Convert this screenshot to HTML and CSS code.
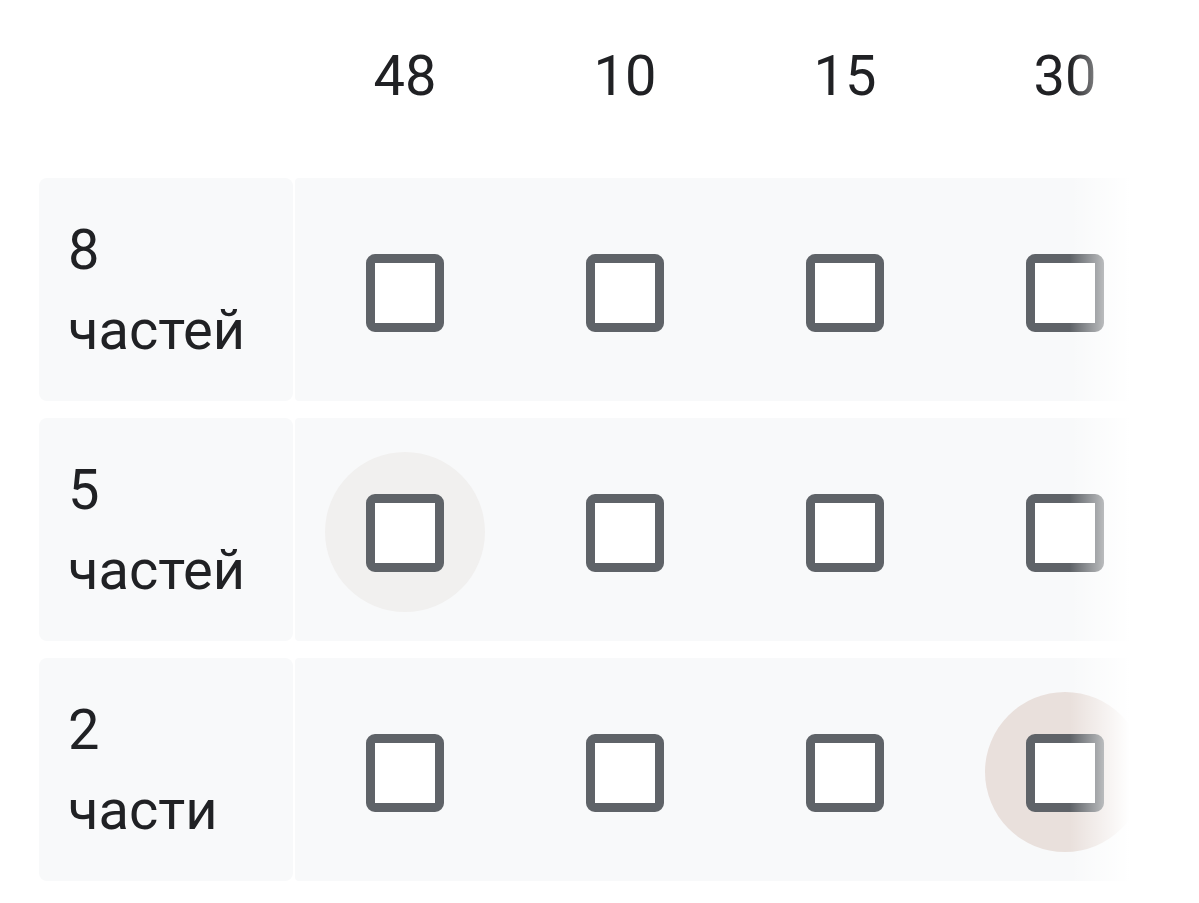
FILE: index.html
```html
<!DOCTYPE html>
<html lang="ru">
<head>
    <meta charset="UTF-8">
    <title>grid</title>
    <link rel="stylesheet" href="styles.css">
</head>
<body>
    <div class="grid-wrap">
        <div class="grid">
            <div class="grid-head">
                <div class="label-cell"></div>
                <div class="col-title">48</div>
                <div class="col-title">10</div>
                <div class="col-title">15</div>
                <div class="col-title">30</div>
            </div>

            <div class="grid-row">
                <div class="label-cell">8<br>частей</div>
                <div class="options">
                    <div class="cell"><span class="box"></span></div>
                    <div class="cell"><span class="box"></span></div>
                    <div class="cell"><span class="box"></span></div>
                    <div class="cell"><span class="box"></span></div>
                </div>
            </div>

            <div class="grid-row">
                <div class="label-cell">5<br>частей</div>
                <div class="options">
                    <div class="cell hover"><span class="box"></span></div>
                    <div class="cell"><span class="box"></span></div>
                    <div class="cell"><span class="box"></span></div>
                    <div class="cell"><span class="box"></span></div>
                </div>
            </div>

            <div class="grid-row">
                <div class="label-cell">2<br>части</div>
                <div class="options">
                    <div class="cell"><span class="box"></span></div>
                    <div class="cell"><span class="box"></span></div>
                    <div class="cell"><span class="box"></span></div>
                    <div class="cell focus"><span class="box"></span></div>
                </div>
            </div>
        </div>
        <div class="fade"></div>
    </div>
</body>
</html>
```

FILE: styles.css
```css
body {
    margin: 0;
    background: #fff;
    font-family: Roboto, "Noto Sans", sans-serif;
    color: #202124;
}

.grid-wrap {
    position: relative;
    width: 1091px;
    margin-left: 39px;
    overflow: hidden;
}

.grid {
    width: 1140px;
}

.grid-head {
    display: flex;
    padding-top: 36px;
    padding-bottom: 62px;
    font-size: 56px;
    line-height: 80px;
}

.col-title {
    width: 220px;
    text-align: center;
}

.grid-row {
    display: flex;
    height: 223px;
    margin-bottom: 17px;
}

.label-cell {
    width: 254px;
    flex-shrink: 0;
    box-sizing: border-box;
    padding-left: 29px;
    display: flex;
    align-items: center;
    background: #f8f9fa;
    border-radius: 8px;
    font-size: 56px;
    line-height: 80px;
}

.grid-head .label-cell {
    width: 256px;
    background: none;
}

.options {
    display: flex;
    background: #f8f9fa;
    border-radius: 4px 0 0 4px;
    margin-left: 2px;
}

.cell {
    width: 220px;
    display: flex;
    align-items: center;
    justify-content: center;
    position: relative;
}

.cell::before {
    content: "";
    position: absolute;
    width: 160px;
    height: 160px;
    left: 30px;
    top: 34px;
    border-radius: 50%;
}

.cell.hover::before {
    background: #f1f0ef;
}

.cell.focus::before {
    background: #e9e0dc;
}

.box {
    position: relative;
    width: 78px;
    height: 78px;
    box-sizing: border-box;
    border: 9px solid #5f6368;
    border-radius: 9px;
    background: #fff;
    margin-top: 6px;
}

.fade {
    position: absolute;
    top: 0;
    right: 0;
    bottom: 0;
    width: 60px;
    background: linear-gradient(to right, rgba(255, 255, 255, 0), #fff);
}
```
